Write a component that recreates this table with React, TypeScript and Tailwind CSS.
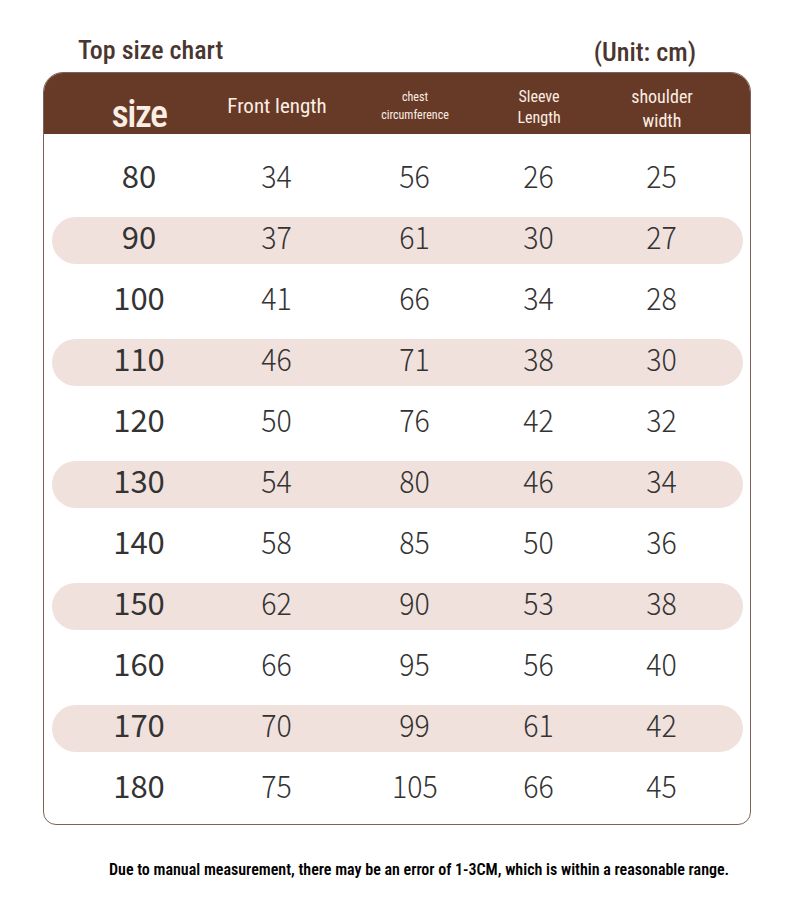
import React from "react";

const rows = [
  ["80", "34", "56", "26", "25"],
  ["90", "37", "61", "30", "27"],
  ["100", "41", "66", "34", "28"],
  ["110", "46", "71", "38", "30"],
  ["120", "50", "76", "42", "32"],
  ["130", "54", "80", "46", "34"],
  ["140", "58", "85", "50", "36"],
  ["150", "62", "90", "53", "38"],
  ["160", "66", "95", "56", "40"],
  ["170", "70", "99", "61", "42"],
  ["180", "75", "105", "66", "45"],
];

const cond = "font-['Roboto',sans-serif] font-stretch-[75%]";
const num = "font-['Noto_Sans_CJK_SC','Noto_Sans',sans-serif]";
const cols = "grid grid-cols-[138px_138px_138px_110px_136px]";

export default function App() {
  return (
    <div className="w-[790px] h-[917px] bg-white overflow-hidden">
      <div className="pt-[30px] px-[43px]">
        {/* title line */}
        <div className={`flex items-center justify-between pl-[35px] pr-[51px] h-[40px] ${cond} text-[#4b3530]`}>
          <span className="text-[26px] font-medium leading-none">Top size chart</span>
          <span className="text-[26px] font-medium leading-none mt-[4px]">(Unit: cm)</span>
        </div>

        {/* chart card */}
        <div className="mt-[2px] w-[708px] border border-[#7d6259] rounded-t-[20px] rounded-b-[13px] overflow-hidden">
          <div className={`${cols} pl-[26px] h-[61px] bg-[#673a27] text-[#fbeee4] ${cond} items-center text-center`}>
            <div className="flex justify-center pt-[20px] text-[38px] font-medium tracking-[-1.5px] leading-none">size</div>
            <div className="flex justify-center pt-[6px] text-[21px] whitespace-nowrap">Front length</div>
            <div className="flex flex-col items-center text-[12px] leading-[18px] pt-[4px]">
              <span>chest</span>
              <span>circumference</span>
            </div>
            <div className="flex flex-col items-center text-[16px] leading-[21px] pt-[7px]">
              <span>Sleeve</span>
              <span>Length</span>
            </div>
            <div className="flex flex-col items-center text-[18px] leading-[24px] pt-[11px]">
              <span>shoulder</span>
              <span>width</span>
            </div>
          </div>

          <div className="pt-[15px] pb-[4px]">
            {rows.map((r, i) => (
              <div key={r[0]} className="h-[61px] py-[7px] pl-[8px] pr-[7px]">
                <div
                  className={`h-full rounded-full pl-[18px] ${cols} items-center ${
                    i % 2 === 1 ? "bg-[#f0e1dd]" : ""
                  }`}
                >
                  {r.map((v, j) => (
                    <div key={j} className="flex justify-center -mt-[11px]">
                      <span
                        className={`inline-block text-[31px] leading-none text-[#333333] ${num} ${
                          j === 0 ? "font-normal" : "font-light scale-x-[0.92]"
                        }`}
                      >
                        {v}
                      </span>
                    </div>
                  ))}
                </div>
              </div>
            ))}
          </div>
        </div>

        <p className={`mt-[33px] pl-[66px] text-[16px] font-semibold text-black ${cond} whitespace-nowrap`}>
          Due to manual measurement, there may be an error of 1-3CM, which is within a reasonable range.
        </p>
      </div>
    </div>
  );
}
